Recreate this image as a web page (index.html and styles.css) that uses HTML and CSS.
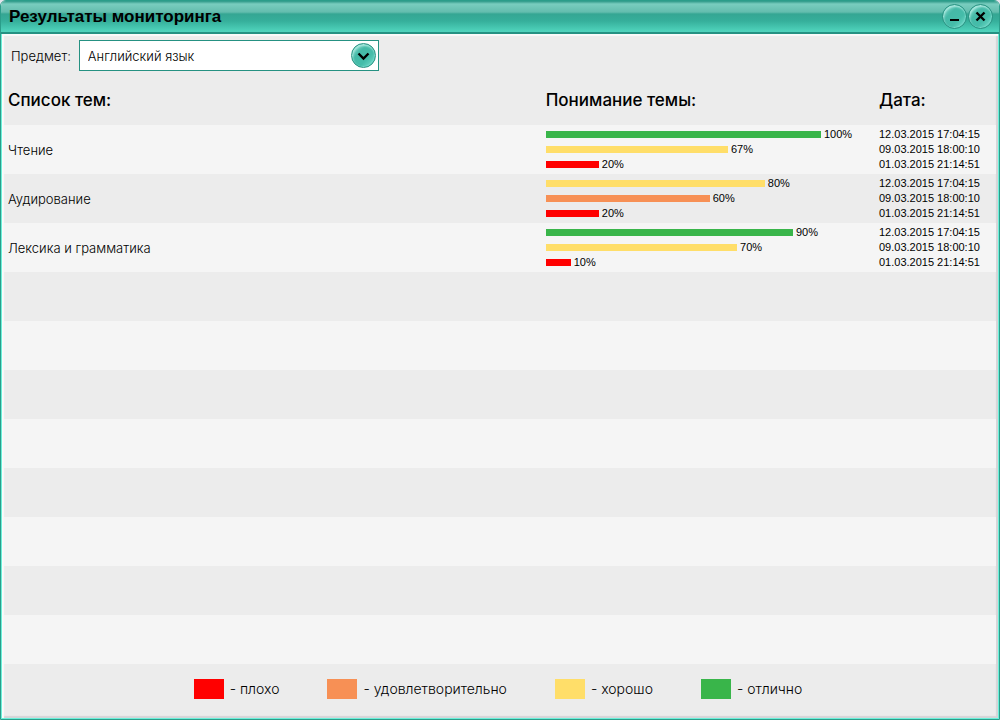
FILE: index.html
```html
<!DOCTYPE html>
<html lang="ru">
<head>
<meta charset="utf-8">
<title>Результаты мониторинга</title>
<link rel="stylesheet" href="styles.css">
</head>
<body>
<main class="window">
  <header class="titlebar">
    <h1 class="title">Результаты мониторинга</h1>
    <button class="round" type="button" aria-label="Свернуть"><svg viewBox="0 0 25 25" width="25" height="25"><path d="M8 16h9" stroke="#000" stroke-width="2"/></svg></button>
    <button class="round" type="button" aria-label="Закрыть"><svg viewBox="0 0 25 25" width="25" height="25"><path d="M8.500 8.500l8 8M16.500 8.500l-8 8" stroke="#000" stroke-width="2.400"/></svg></button>
  </header>
  <section class="content">
    <div class="filter">
      <label for="subject">Предмет:</label>
      <div class="picker">
        <select id="subject"><option>Английский язык</option></select>
        <span class="round drop"><svg viewBox="0 0 25 25" width="25" height="25"><path d="M7.500 10.500l5 5 5-5" fill="none" stroke="#000" stroke-width="2.400"/></svg></span>
      </div>
    </div>
    <table class="results">
      <thead><tr><th class="topic">Список тем:</th><th class="score">Понимание темы:</th><th class="date">Дата:</th></tr></thead>
      <tbody>
        <tr><td>Чтение</td>
          <td class="bars"><div class="line"><i class="bar excellent" style="width:100%"></i>100%</div><div class="line"><i class="bar good" style="width:66.2%"></i>67%</div><div class="line"><i class="bar bad" style="width:19.3%"></i>20%</div></td>
          <td class="dates"><div class="line">12.03.2015 17:04:15</div><div class="line">09.03.2015 18:00:10</div><div class="line">01.03.2015 21:14:51</div></td></tr>
        <tr><td>Аудирование</td>
          <td class="bars"><div class="line"><i class="bar good" style="width:79.6%"></i>80%</div><div class="line"><i class="bar fair" style="width:59.6%"></i>60%</div><div class="line"><i class="bar bad" style="width:19.3%"></i>20%</div></td>
          <td class="dates"><div class="line">12.03.2015 17:04:15</div><div class="line">09.03.2015 18:00:10</div><div class="line">01.03.2015 21:14:51</div></td></tr>
        <tr><td>Лексика и грамматика</td>
          <td class="bars"><div class="line"><i class="bar excellent" style="width:89.8%"></i>90%</div><div class="line"><i class="bar good" style="width:69.5%"></i>70%</div><div class="line"><i class="bar bad" style="width:9.1%"></i>10%</div></td>
          <td class="dates"><div class="line">12.03.2015 17:04:15</div><div class="line">09.03.2015 18:00:10</div><div class="line">01.03.2015 21:14:51</div></td></tr>
        <tr><td></td><td></td><td></td></tr>
        <tr><td></td><td></td><td></td></tr>
        <tr><td></td><td></td><td></td></tr>
        <tr><td></td><td></td><td></td></tr>
        <tr><td></td><td></td><td></td></tr>
        <tr><td></td><td></td><td></td></tr>
        <tr><td></td><td></td><td></td></tr>
        <tr><td></td><td></td><td></td></tr>
      </tbody>
    </table>
    <ul class="legend">
      <li><i class="swatch bad"></i>- плохо</li>
      <li><i class="swatch fair"></i>- удовлетворительно</li>
      <li><i class="swatch good"></i>- хорошо</li>
      <li><i class="swatch excellent"></i>- отлично</li>
    </ul>
  </section>
</main>
</body>
</html>
```
FILE: styles.css
```css
* { box-sizing: border-box; }
body {
  margin: 0;
  background: #e4e4ec;
  color: #000;
  font: 300 13px/16px Inter, "Open Sans", sans-serif;
}
.window {
  min-height: 100vh;
  display: flex;
  flex-direction: column;
  border: 1px solid #2b9d8a;
  border-radius: 6px 6px 0 0;
  background: #ececec;
  overflow: hidden;
}
.titlebar {
  height: 33px;
  flex: none;
  display: flex;
  align-items: center;
  gap: 1px;
  padding: 0 6px 0 8px;
  border-bottom: 2px solid #259182;
  background: linear-gradient(#2b9786 0, #79cdbf 3px, #64bdae 11px, #35a693 13px, #36af9b 20px, #4fd2bb 30px);
}
.title {
  flex: 1;
  margin: 0;
  font: bold 17px/20px "Liberation Sans", Arial, sans-serif;
}
.round {
  width: 25px;
  height: 25px;
  padding: 0;
  border: 1px solid #2a9282;
  border-radius: 50%;
  background: linear-gradient(135deg, #8fdcd0, #45b9a7 35%, #45bca9 65%, #7be0d0);
  box-shadow: inset 1px 2px 2px #a9e8de, inset -1px -1px 1px #6fd6c6;
}
.round svg { display: block; margin: -1px; }
.content {
  flex: 1;
  display: flex;
  flex-direction: column;
  padding: 0 2px;
  border: solid #6cf0da;
  border-width: 0 1px 1px;
  box-shadow: inset 2px 2px 1px #fafafa, inset -2px -2px 1px #d5d5d8;
}
.filter {
  display: flex;
  align-items: center;
  gap: 8px;
  padding: 6px 7px 5px;
}
.picker { position: relative; width: 300px; }
select {
  display: block;
  width: 100%;
  height: 31px;
  padding: 0 32px 0 8px;
  appearance: none;
  border: 1px solid #259182;
  border-radius: 0;
  background: #fff;
  color: #000;
  font: inherit;
}
.drop {
  position: absolute;
  right: 3px;
  top: 3px;
  pointer-events: none;
}
.results {
  width: 100%;
  border-collapse: collapse;
  table-layout: fixed;
}
th {
  height: 49px;
  padding: 0 4px 2px;
  text-align: left;
  font: 500 17px/20px Inter, "Open Sans", sans-serif;
}
.score { width: 33.6%; }
.date { width: 12.2%; }
td { height: 49px; padding: 0 4px; }
tbody tr:nth-child(odd) { background: #f5f5f5; }
.bars { padding-right: 54px; }
.line {
  display: flex;
  align-items: center;
  gap: 3px;
  font: 11px/15px "Liberation Sans", Arial, sans-serif;
  white-space: nowrap;
}
.bar { flex: none; height: 7px; }
.bad { background: #f00; }
.fair { background: #f79055; }
.good { background: #ffde69; }
.excellent { background: #39b54a; }
.legend {
  flex: 1;
  display: flex;
  align-items: center;
  justify-content: center;
  flex-wrap: wrap;
  gap: 8px 48px;
  margin: 0;
  padding: 0 4px 4px 0;
  list-style: none;
  font-size: 14px;
}
.legend li { display: flex; align-items: center; gap: 6px; }
.swatch { width: 30px; height: 20px; }
```
